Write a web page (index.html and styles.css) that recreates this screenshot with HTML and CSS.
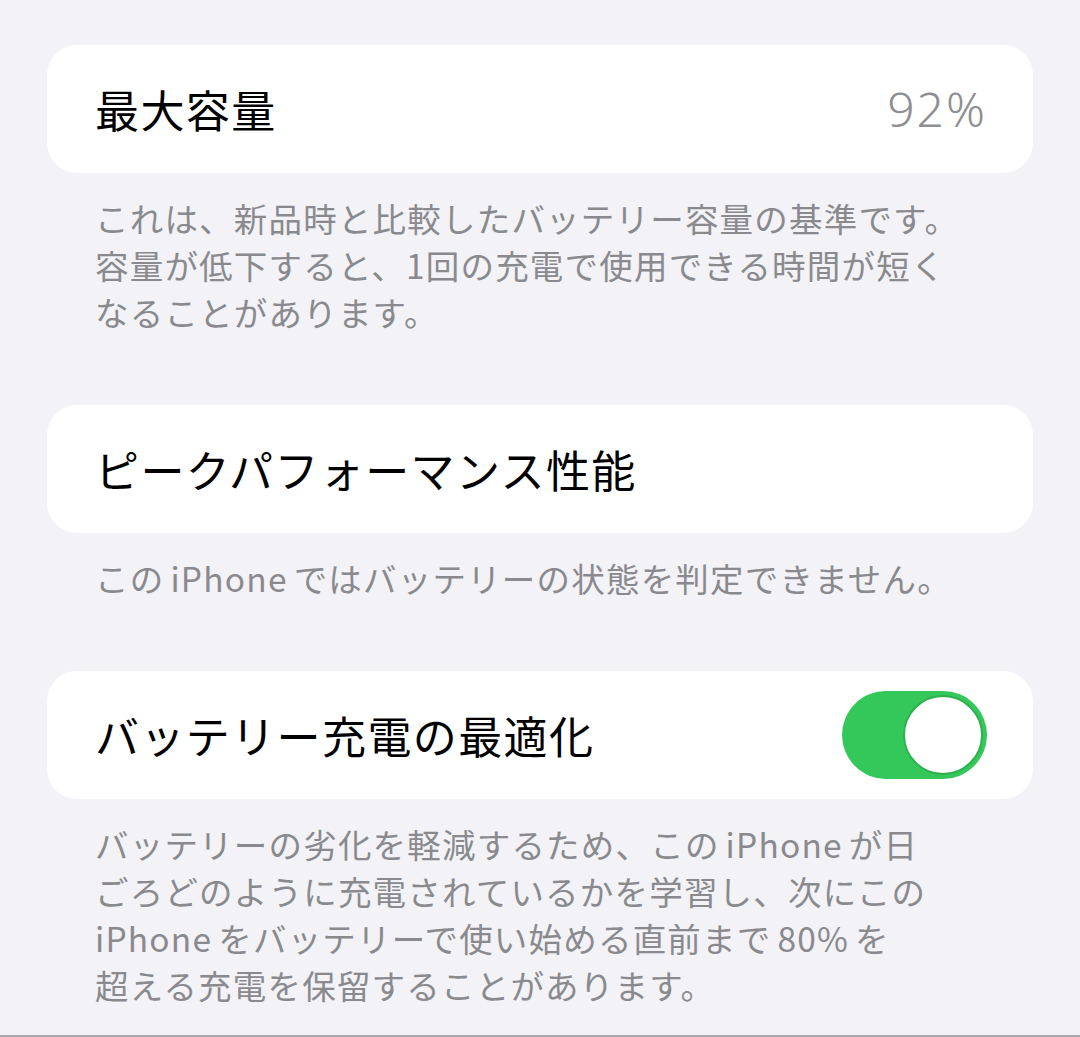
FILE: index.html
```html
<!DOCTYPE html>
<html lang="ja">
<head>
  <meta charset="UTF-8" />
  <meta name="viewport" content="width=device-width, initial-scale=1" />
  <title>バッテリーの状態</title>
  <link rel="stylesheet" href="styles.css">
</head>
<body>
  <div class="page">
    <div class="card">
      <span class="label">最大容量</span>
      <span class="value">92%</span>
    </div>
    <p class="note">これは、新品時と比較したバッテリー容量の基準です。<br>容量が低下すると、1回の充電で使用できる時間が短く<br>なることがあります。</p>

    <div class="card">
      <span class="label">ピークパフォーマンス性能</span>
    </div>
    <p class="note">この<span class="latin">iPhone</span>ではバッテリーの状態を判定できません。</p>

    <div class="card">
      <span class="label">バッテリー充電の最適化</span>
      <span class="switch on"><span class="knob"></span></span>
    </div>
    <p class="note">バッテリーの劣化を軽減するため、この<span class="latin">iPhone</span>が日<br>ごろどのように充電されているかを学習し、次にこの<br><span class="latin first">iPhone</span>をバッテリーで使い始める直前まで<span class="latin">80%</span>を<br>超える充電を保留することがあります。</p>
  </div>
</body>
</html>
```

FILE: styles.css
```css
*, *::before, *::after { margin: 0; padding: 0; box-sizing: border-box; }

body {
  background: #f2f2f7;
  font-family: "Noto Sans CJK JP", "Noto Sans", sans-serif;
  color: #1c1c1e;
}

.page {
  height: 1037px;
  padding: 45px 47px 0;
  border-bottom: 2px solid #a9a9ad;
  overflow: hidden;
}

.card {
  height: 128px;
  background: #fff;
  border-radius: 30px;
  padding: 0 46px 0 48px;
  display: flex;
  align-items: center;
  justify-content: space-between;
}

.label {
  font-size: 44px;
  line-height: 1;
  letter-spacing: 1.4px;
  color: #000;
}

.value {
  font-size: 48px;
  line-height: 1;
  letter-spacing: 2px;
  color: #8e8e93;
  font-family: "Noto Sans", "Noto Sans CJK JP", sans-serif;
  font-weight: 300;
}

.note {
  margin: 21px 0 70px;
  padding-left: 48px;
  font-size: 33.5px;
  line-height: 47px;
  letter-spacing: 1.2px;
  color: #8a8a8e;
}

.latin {
  margin: 0 6px;
}

.latin.first {
  margin-left: 0;
}

.switch {
  width: 145px;
  height: 88px;
  border-radius: 44px;
  background: #34c759;
  padding: 4px;
  display: flex;
  justify-content: flex-end;
}

.knob {
  width: 80px;
  height: 80px;
  border-radius: 50%;
  background: #fff;
  border: 2px solid #2fb04f;
}
```
